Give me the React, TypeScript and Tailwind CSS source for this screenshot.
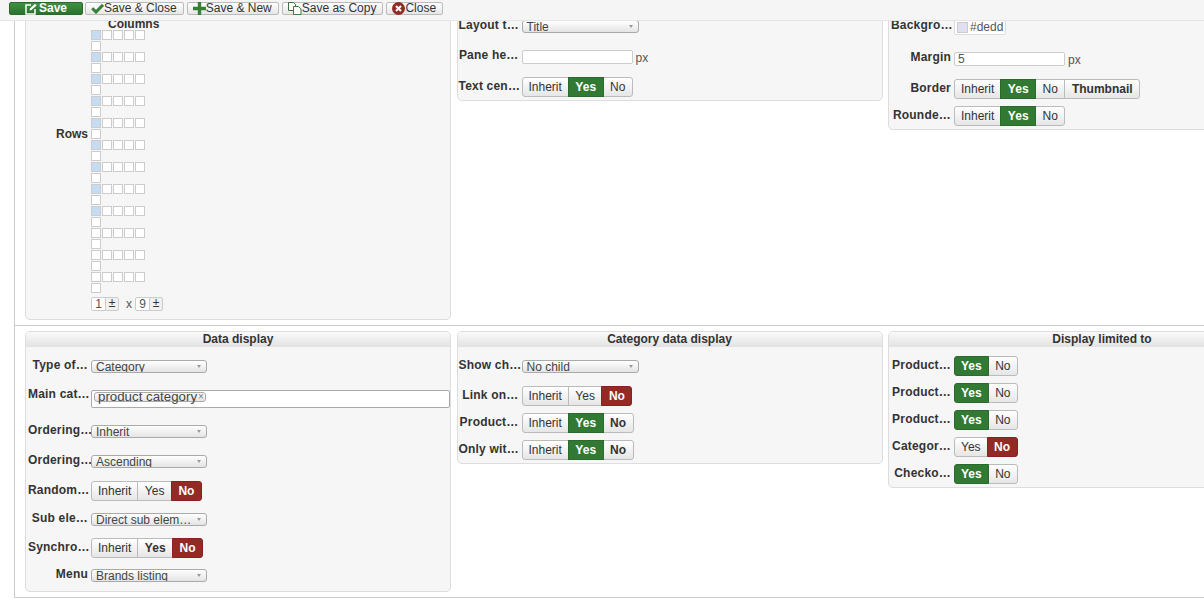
import React from "react";

type Btn = { t: string; on?: "yes" | "no"; bold?: boolean };

function Toggle({ items }: { items: Btn[] }) {
  return (
    <div className="flex h-[20px] w-fit">
      {items.map((b, i) => (
        <div
          key={i}
          className={
            "flex h-[20px] items-center px-[6.5px] text-[12px] leading-[18px] border -ml-px first:ml-0 first:px-[6px] first:rounded-l-[3px] last:rounded-r-[3px] " +
            (b.on === "yes"
              ? "bg-[#327a34] border-[#2a6b2c] text-white font-bold z-10"
              : b.on === "no"
              ? "bg-[#942a25] border-[#85231f] text-white font-bold z-10"
              : "bg-gradient-to-b from-white to-[#e6e6e6] border-[#bbbbbb] text-[#333333] " + (b.bold ? "font-bold" : ""))
          }
        >
          {b.t}
        </div>
      ))}
    </div>
  );
}

function Select({ value, w = "w-[116px]" }: { value: string; w?: string }) {
  return (
    <div className={"relative mt-[4px] h-[13px] overflow-hidden rounded-[3px] border border-[#aaaaaa] bg-gradient-to-b from-white to-[#e4e4e4] pl-[4px] text-[12px] leading-[13px] text-[#444444] whitespace-nowrap " + w}>
      {value}
      <span className="absolute right-[5px] top-[4px] h-0 w-0 border-x-[2px] border-t-[3px] border-x-transparent border-t-[#999999]" />
    </div>
  );
}

function TextInput({ value, w }: { value?: string; w: string }) {
  return (
    <div className="flex items-start">
      <div className={"mt-[4px] h-[14px] rounded-[2px] border border-[#cccccc] bg-white pl-[3px] text-[12px] leading-[13px] text-[#555555] " + w}>
        {value}
      </div>
      <span className="ml-[3px] mt-[4px] text-[12px] leading-[16px] text-[#555555]">px</span>
    </div>
  );
}

function Field({
  label,
  lw = "w-[60px]",
  className = "",
  children,
}: {
  label: string;
  lw?: string;
  className?: string;
  children: React.ReactNode;
}) {
  return (
    <div className={"flex items-start " + className}>
      <div className={"mr-[3px] shrink-0 whitespace-nowrap text-right text-[12px] font-bold leading-[18px] tracking-[0.2px] text-[#333333] " + lw}>
        {label}
      </div>
      {children}
    </div>
  );
}

function Panel({ title, className = "", children }: { title?: string; className?: string; children: React.ReactNode }) {
  return (
    <div className={"w-[426px] shrink-0 rounded-[5px] border border-[#dddddd] bg-[#f6f6f6] " + className}>
      {title && (
        <div className="h-[15px] rounded-t-[4px] bg-gradient-to-b from-[#fafafa] to-[#e2e2e2] text-center text-[12px] font-bold leading-[15px] text-[#333333]">
          {title}
        </div>
      )}
      {children}
    </div>
  );
}

function Spinner({ n }: { n: number }) {
  return (
    <div className="flex h-[14px] text-[12px] leading-[13px] text-[#555555]">
      <div className="w-[15px] rounded-l-[2px] border border-[#cccccc] bg-white text-center">{n}</div>
      <div className="-ml-px w-[14px] rounded-r-[2px] border border-[#cccccc] bg-[#f0f0f0] text-center leading-[11px] text-[#333333]">±</div>
    </div>
  );
}

function RowGrid() {
  const rows = Array.from({ length: 12 });
  return (
    <div className="flex flex-col gap-px">
      {rows.map((_, i) => (
        <React.Fragment key={i}>
          <div className="flex gap-px">
            {[0, 1, 2, 3, 4].map((c) => (
              <div
                key={c}
                className={"h-[10px] w-[10px] border border-[#cccccc] " + (c === 0 && i < 9 ? "bg-[#c5dcf3]" : "bg-white")}
              />
            ))}
          </div>
          <div className="h-[10px] w-[10px] border border-[#cccccc] bg-white" />
        </React.Fragment>
      ))}
    </div>
  );
}

function ToolBtn({ icon, label }: { icon: React.ReactNode; label: string }) {
  return (
    <div className="flex h-[13px] items-center rounded-[2px] border border-[#bbbbbb] bg-gradient-to-b from-white to-[#e6e6e6] pl-[5px] pr-[6px] text-[12px] leading-[13px] text-[#333333] whitespace-nowrap">
      {icon}
      {label}
    </div>
  );
}

const CheckIcon = (
  <svg width="13" height="11" viewBox="0 0 13 11"><path d="M1.2 5.2 5 9l7-7.2" fill="none" stroke="#378137" strokeWidth="3" /></svg>
);
const PlusIcon = (
  <svg width="13" height="13" viewBox="0 0 13 13"><path d="M6.5 0v13M0 6.5h13" fill="none" stroke="#378137" strokeWidth="3.4" /></svg>
);
const CopyIcon = (
  <svg width="14" height="13" viewBox="0 0 14 13" fill="none">
    <path d="M0.5 0.5h5l2 2v6h-7z" fill="#ffffff" stroke="#3f6b42" />
    <path d="M5.5 4.5h5l2.5 2.5v5.5H5.5z" fill="#ffffff" stroke="#378137" />
  </svg>
);
const CloseIcon = (
  <svg width="13" height="13" viewBox="0 0 13 13">
    <circle cx="6.5" cy="6.5" r="6.5" fill="#942a25" />
    <path d="M4 4l5 5M9 4l-5 5" stroke="#ffffff" strokeWidth="2" />
  </svg>
);
const SaveIcon = (
  <svg width="12" height="12" viewBox="0 0 12 12" fill="none">
    <path d="M6 2H1v9h9V6" stroke="#ffffff" strokeWidth="1.5" />
    <path d="M4.5 7.5 5 5.5 10 0.8l1.6 1.6L6.5 7z" fill="#ffffff" />
  </svg>
);

export default function App() {
  return (
    <div className="h-[604px] w-[1204px] overflow-hidden bg-white font-['Liberation_Sans',Arial,sans-serif]">
      <div className="relative z-20 flex h-[21px] items-start gap-[3px] border-b border-[#e5e5e5] bg-[#f5f5f5] pl-[9px] pt-[2px]">
        <div className="-mr-px flex h-[13px] w-[74px] items-center justify-center gap-[2px] rounded-[2px] border border-[#2a6b2c] bg-gradient-to-b from-[#3f9142] to-[#2c722f] text-[12px] font-bold leading-[13px] text-white">
          {SaveIcon}
          Save
        </div>
        <ToolBtn icon={CheckIcon} label="Save & Close" />
        <ToolBtn icon={PlusIcon} label="Save & New" />
        <ToolBtn icon={CopyIcon} label="Save as Copy" />
        <ToolBtn icon={CloseIcon} label="Close" />
      </div>

      <div className="ml-[14px] h-[577px] w-[1400px] overflow-hidden border-b border-l border-[#cccccc]">
        {/* top row, scrolled under the toolbar */}
        <div className="flex h-[305px] gap-[5.5px] border-b border-[#cccccc] pl-[10px]">
          <Panel className="-mt-[4px] h-[303px]">
            <div className="ml-[82px] text-[12px] font-bold leading-[12px] text-[#333333]">Columns</div>
            <div className="flex">
              <div className="mt-[97px] w-[62px] text-right text-[12px] font-bold leading-[14px] text-[#333333]">Rows</div>
              <div className="ml-[3px]">
                <RowGrid />
                <div className="mt-[4px] flex items-center">
                  <Spinner n={1} />
                  <span className="ml-[7px] mr-[3px] text-[12px] leading-[14px] text-[#555555]">x</span>
                  <Spinner n={9} />
                </div>
              </div>
            </div>
          </Panel>

          <Panel className="-mt-[4px] h-[84px]">
            <Field label="Layout t…" className="-mt-[2px] pl-[1px]">
              <Select value="Title" w="w-[117px]" />
            </Field>
            <Field label="Pane he…" className="mt-[12px] pl-[1px]">
              <TextInput w="w-[111px]" />
            </Field>
            <Field label="Text cen…" className="mt-[11px] pl-[1px]">
              <Toggle items={[{ t: "Inherit" }, { t: "Yes", on: "yes" }, { t: "No" }]} />
            </Field>
          </Panel>

          <Panel className="-mt-[4px] h-[113px] w-[428px]">
            <Field label="Backgro…" className="-mt-[2px] pl-[2px]">
              <div className="mt-[4px] flex h-[15px] w-[52px] items-center rounded-[2px] border border-[#dddddd] bg-white pl-[2px] text-[12px] leading-[13px] text-[#555555]">
                <span className="mr-[2px] h-[11px] w-[11px] border border-[#cccccc] bg-[#e0dfef]" />
                #dedd
              </div>
            </Field>
            <Field label="Margin" className="mt-[13px] pl-[2px]">
              <TextInput value="5" w="w-[111px]" />
            </Field>
            <Field label="Border" className="mt-[11px] pl-[2px]">
              <Toggle items={[{ t: "Inherit" }, { t: "Yes", on: "yes" }, { t: "No" }, { t: "Thumbnail", bold: true }]} />
            </Field>
            <Field label="Rounde…" className="mt-[7px] pl-[2px]">
              <Toggle items={[{ t: "Inherit" }, { t: "Yes", on: "yes" }, { t: "No" }]} />
            </Field>
          </Panel>
        </div>

        {/* bottom row */}
        <div className="flex gap-[5.5px] pl-[10px] pt-[5px]">
          <Panel title="Data display" className="h-[261px]">
            <div className="pl-[2px] pt-[9px]">
              <Field label="Type of…">
                <Select value="Category" />
              </Field>
              <Field label="Main cat…" className="mt-[11px]">
                <div className="mt-[5px] h-[18px] w-[359px] rounded-[2px] border border-[#aaaaaa] bg-white pl-[2px] pt-px">
                  <div className="flex h-[10px] w-fit items-center rounded-[3px] border border-[#aaaaaa] bg-gradient-to-b from-white to-[#e4e4e4] pl-[3px] pr-px text-[13.3px] leading-[10px] text-[#444444]">
                    product category
                    <span className="ml-px text-[10px] text-[#777777]">×</span>
                  </div>
                </div>
              </Field>
              <Field label="Ordering…" className="mt-[13px]">
                <Select value="Inherit" />
              </Field>
              <Field label="Ordering…" className="mt-[12px]">
                <Select value="Ascending" />
              </Field>
              <Field label="Random…" className="mt-[12px]">
                <Toggle items={[{ t: "Inherit" }, { t: "Yes" }, { t: "No", on: "no" }]} />
              </Field>
              <Field label="Sub ele…" className="mt-[8px]">
                <Select value="Direct sub elem…" />
              </Field>
              <Field label="Synchro…" className="mt-[11px]">
                <Toggle items={[{ t: "Inherit" }, { t: "Yes", bold: true }, { t: "No", on: "no" }]} />
              </Field>
              <Field label="Menu" className="mt-[7px]">
                <Select value="Brands listing" />
              </Field>
            </div>
          </Panel>

          <Panel title="Category data display" className="h-[133px]">
            <div className="pl-[1px] pt-[9px]">
              <Field label="Show ch…">
                <Select value="No child" w="w-[117px]" />
              </Field>
              <Field label="Link on…" className="mt-[12px]">
                <Toggle items={[{ t: "Inherit" }, { t: "Yes" }, { t: "No", on: "no" }]} />
              </Field>
              <Field label="Product…" className="mt-[7px]">
                <Toggle items={[{ t: "Inherit" }, { t: "Yes", on: "yes" }, { t: "No", bold: true }]} />
              </Field>
              <Field label="Only wit…" className="mt-[7px]">
                <Toggle items={[{ t: "Inherit" }, { t: "Yes", on: "yes" }, { t: "No", bold: true }]} />
              </Field>
            </div>
          </Panel>

          <Panel title="Display limited to" className="h-[157px] w-[428px]">
            <div className="flex flex-col gap-[7px] pl-[2px] pt-[9px]">
              <Field label="Product…"><Toggle items={[{ t: "Yes", on: "yes" }, { t: "No" }]} /></Field>
              <Field label="Product…"><Toggle items={[{ t: "Yes", on: "yes" }, { t: "No" }]} /></Field>
              <Field label="Product…"><Toggle items={[{ t: "Yes", on: "yes" }, { t: "No" }]} /></Field>
              <Field label="Categor…"><Toggle items={[{ t: "Yes" }, { t: "No", on: "no" }]} /></Field>
              <Field label="Checko…"><Toggle items={[{ t: "Yes", on: "yes" }, { t: "No" }]} /></Field>
            </div>
          </Panel>
        </div>
      </div>
    </div>
  );
}
